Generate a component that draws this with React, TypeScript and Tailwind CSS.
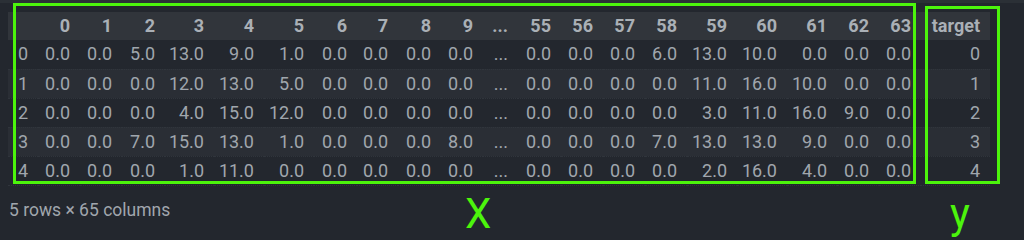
import React from "react";

const cols = [
  { label: "0", w: "w-[42px]" },
  { label: "1", w: "w-[42px]" },
  { label: "2", w: "w-[43px]" },
  { label: "3", w: "w-[49px]" },
  { label: "4", w: "w-[50px]" },
  { label: "5", w: "w-[50px]" },
  { label: "6", w: "w-[43px]" },
  { label: "7", w: "w-[41px]" },
  { label: "8", w: "w-[43px]" },
  { label: "9", w: "w-[42px]" },
  { label: "...", w: "w-[35px]" },
  { label: "55", w: "w-[43px]" },
  { label: "56", w: "w-[42px]" },
  { label: "57", w: "w-[42px]" },
  { label: "58", w: "w-[42px]" },
  { label: "59", w: "w-[50px]" },
  { label: "60", w: "w-[50px]" },
  { label: "61", w: "w-[50px]" },
  { label: "62", w: "w-[42px]" },
  { label: "63", w: "w-[42px]" },
  { label: "target", w: "w-[69px]" },
];

const rows = [
  ["0.0", "0.0", "5.0", "13.0", "9.0", "1.0", "0.0", "0.0", "0.0", "0.0", "...", "0.0", "0.0", "0.0", "6.0", "13.0", "10.0", "0.0", "0.0", "0.0", "0"],
  ["0.0", "0.0", "0.0", "12.0", "13.0", "5.0", "0.0", "0.0", "0.0", "0.0", "...", "0.0", "0.0", "0.0", "0.0", "11.0", "16.0", "10.0", "0.0", "0.0", "1"],
  ["0.0", "0.0", "0.0", "4.0", "15.0", "12.0", "0.0", "0.0", "0.0", "0.0", "...", "0.0", "0.0", "0.0", "0.0", "3.0", "11.0", "16.0", "9.0", "0.0", "2"],
  ["0.0", "0.0", "7.0", "15.0", "13.0", "1.0", "0.0", "0.0", "0.0", "8.0", "...", "0.0", "0.0", "0.0", "7.0", "13.0", "13.0", "9.0", "0.0", "0.0", "3"],
  ["0.0", "0.0", "0.0", "1.0", "11.0", "0.0", "0.0", "0.0", "0.0", "0.0", "...", "0.0", "0.0", "0.0", "0.0", "2.0", "16.0", "4.0", "0.0", "0.0", "4"],
];

export default function App() {
  return (
    <div className="w-[1024px] h-[240px] overflow-hidden bg-[#23272e] text-[#a0a6ad] font-['Roboto',sans-serif] text-[18px]">
      <div className="h-[3px] bg-[#2b3036]" />
      <div className="relative pl-[8px] pt-[9px]">
        <table className="table-fixed border-collapse leading-none">
          <thead>
            <tr className="h-[28px] bg-[#31353b] text-[#aab0b6] font-bold">
              <th className="w-[30px]" />
              {cols.map((c) => (
                <th key={c.label} className={`${c.w} text-right pr-[10px] p-0`}>
                  {c.label}
                </th>
              ))}
            </tr>
          </thead>
          <tbody>
            {rows.map((r, i) => (
              <tr
                key={i}
                className={`h-[29px] ${i % 2 === 1 ? "bg-[#2a2e35]" : "bg-[#23272e]"} border-b border-dotted border-[#30353c]`}
              >
                <td className="pl-[10px] text-left">{i}</td>
                {r.map((v, j) => (
                  <td key={j} className="text-right pr-[10px]">
                    {v}
                  </td>
                ))}
              </tr>
            ))}
          </tbody>
        </table>

        {/* annotation boxes */}
        <div className="absolute left-[13px] top-0 w-[903px] h-[181px] border-[3px] border-[#4cf40c]" />
        <div className="absolute left-[925px] top-[3px] w-[75px] h-[178px] border-[3px] border-[#4cf40c]" />
      </div>

      <div className="flex items-end h-[52px]">
        <div className="w-[465px] pl-[9px] pb-[14px] text-[17.5px]">5 rows × 65 columns</div>
        <div className="w-[485px] text-[42px] leading-none text-[#4cf40c] pb-[3px]">X</div>
        <div className="text-[42px] leading-none text-[#4cf40c] pb-[3px]">y</div>
      </div>
    </div>
  );
}
